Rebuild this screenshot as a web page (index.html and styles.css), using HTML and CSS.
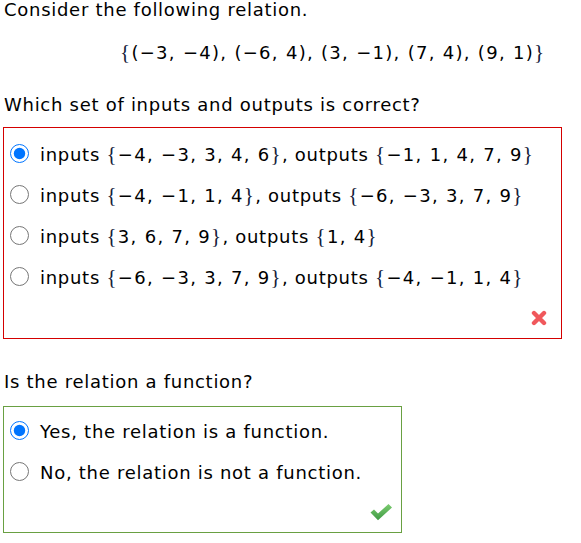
FILE: index.html
```html
<!DOCTYPE html>
<html>
<head>
<meta charset="utf-8">
<link rel="stylesheet" href="styles.css">
</head>
<body>
<p class="intro">Consider the following relation.</p>
<p class="relation m"><span class="br">{</span>(−3, −4), (−6, 4), (3, −1), (7, 4), (9, 1)<span class="br">}</span></p>
<p class="question">Which set of inputs and outputs is correct?</p>
<div class="box box-wrong">
  <label class="opt"><input type="radio" name="q1" checked><span>inputs <span class="m"><span class="br">{</span>−4, −3, 3, 4, 6<span class="br">}</span></span>, outputs <span class="m"><span class="br">{</span>−1, 1, 4, 7, 9<span class="br">}</span></span></span></label>
  <label class="opt"><input type="radio" name="q1"><span>inputs <span class="m"><span class="br">{</span>−4, −1, 1, 4<span class="br">}</span></span>, outputs <span class="m"><span class="br">{</span>−6, −3, 3, 7, 9<span class="br">}</span></span></span></label>
  <label class="opt"><input type="radio" name="q1"><span>inputs <span class="m"><span class="br">{</span>3, 6, 7, 9<span class="br">}</span></span>, outputs <span class="m"><span class="br">{</span>1, 4<span class="br">}</span></span></span></label>
  <label class="opt"><input type="radio" name="q1"><span>inputs <span class="m"><span class="br">{</span>−6, −3, 3, 7, 9<span class="br">}</span></span>, outputs <span class="m"><span class="br">{</span>−4, −1, 1, 4<span class="br">}</span></span></span></label>
  <div class="foot foot-wrong">
    <svg width="16" height="16" viewBox="0 0 16 16"><path d="M3 3 L13 13 M13 3 L3 13" stroke="#f0585c" stroke-width="4.4" stroke-linecap="round" fill="none"/></svg>
  </div>
</div>
<p class="question2">Is the relation a function?</p>
<div class="box box-right">
  <label class="opt"><input type="radio" name="q2" checked><span>Yes, the relation is a function.</span></label>
  <label class="opt"><input type="radio" name="q2"><span>No, the relation is not a function.</span></label>
  <div class="foot foot-right">
    <svg width="24" height="18" viewBox="0 0 24 18"><defs><linearGradient id="g" x1="0" y1="0" x2="0" y2="1"><stop offset="0" stop-color="#7ccc70"/><stop offset="1" stop-color="#3f9a44"/></linearGradient></defs><path d="M1.5 9.5 L5 6.5 L9 10.5 L19.5 1 L23 4.5 L9 17.2 Z" fill="url(#g)"/></svg>
  </div>
</div>
</body>
</html>
```
FILE: styles.css
```css
html, body {
  margin: 0;
  padding: 0;
  background: #fff;
}
body {
  font-family: "DejaVu Sans", Verdana, sans-serif;
  font-size: 18px;
  color: #000;
  padding-left: 4px;
  letter-spacing: 0.72px;
}
p {
  margin: 0;
}
.intro {
  line-height: 18px;
  padding-top: 1px;
}
.relation {
  line-height: 21px;
  margin-top: 23px;
  padding-left: 116px;
}
.m {
  letter-spacing: 1.3px;
}
.question {
  line-height: 21px;
  margin-top: 31px;
}
.question2 {
  line-height: 21px;
  margin-top: 32px;
}
.br {
  font-family: "Liberation Serif", "DejaVu Serif", serif;
  font-size: 21px;
  color: #14203a;
}
.box {
  margin-left: -1px;
  box-sizing: border-box;
  display: flex;
  flex-direction: column;
}
.box-wrong {
  margin-top: 12px;
  width: 559px;
  border: 1px solid #d40000;
  padding-top: 6px;
}
.box-right {
  margin-top: 14px;
  width: 399px;
  border: 1px solid #69a042;
  padding-top: 4px;
}
.opt {
  display: flex;
  align-items: center;
  line-height: 41px;
  height: 41px;
  padding-left: 6px;
}
.opt input {
  width: 19px;
  height: 19px;
  margin: 0 11px 2px 0;
}
.foot {
  display: flex;
  justify-content: flex-end;
}
.foot-wrong {
  height: 40px;
  padding: 12px 14px 0 0;
  box-sizing: border-box;
}
.foot-right {
  height: 39px;
  padding: 10px 8px 0 0;
  box-sizing: border-box;
}
```
